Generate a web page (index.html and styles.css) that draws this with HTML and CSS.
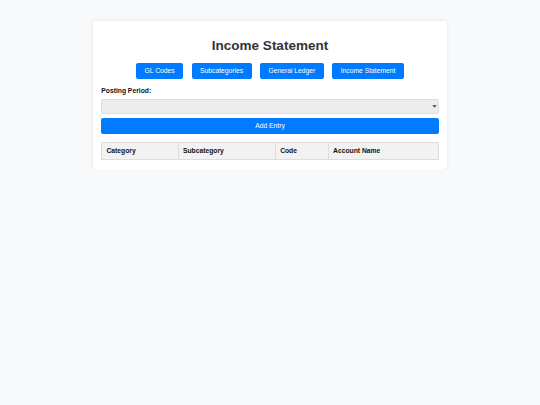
FILE: index.html
```html
<!DOCTYPE html>
<html lang="en">
<head>
<meta charset="utf-8">
<title>Income Statement</title>
<link rel="stylesheet" href="styles.css">
</head>
<body>
<div class="container">
  <h1 class="title">Income Statement</h1>
  <nav class="nav">
    <button class="btn">GL Codes</button>
    <button class="btn">Subcategories</button>
    <button class="btn">General Ledger</button>
    <button class="btn">Income Statement</button>
  </nav>
  <label class="label" for="period">Posting Period:</label>
  <div class="select-wrap">
    <select id="period" class="select"><option></option></select>
    <svg class="chev" width="5" height="3" viewBox="0 0 5 3" aria-hidden="true"><path d="M0.3 0.3 L2.5 2.6 L4.7 0.3 Z" fill="#333"/></svg>
  </div>
  <button class="btn btn-block">Add Entry</button>
  <table class="table">
    <thead>
      <tr>
        <th class="c1">Category</th>
        <th class="c2">Subcategory</th>
        <th class="c3">Code</th>
        <th class="c4">Account Name</th>
      </tr>
    </thead>
    <tbody></tbody>
  </table>
</div>
</body>
</html>
```

FILE: styles.css
```css
html, body {
  margin: 0;
  padding: 0;
}
body {
  background: #f8f9fa;
  font-family: "Liberation Sans", Arial, sans-serif;
  color: #333;
  padding-top: 21px;
}
.container {
  width: 337.5px;
  margin: 0 auto;
  padding: 8.4px;
  background: #fff;
  border-radius: 3.4px;
  box-shadow: 0 0 4px rgba(0, 0, 0, 0.1);
}
.title {
  font-size: 13.5px;
  line-height: 15.5px;
  margin: 9px 0;
  text-align: center;
  font-weight: bold;
  color: #333;
}
.nav {
  display: flex;
  justify-content: center;
  gap: 8.5px;
  margin-bottom: 8.4px;
}
.btn {
  font-family: "Liberation Sans", Arial, sans-serif;
  font-size: 6.75px;
  line-height: 7.8px;
  padding: 4.2px 8.4px;
  background: #007bff;
  color: #fff;
  border: none;
  border-radius: 2px;
  margin: 0;
}
.label {
  display: block;
  font-size: 6.75px;
  line-height: 7.8px;
  font-weight: bold;
  color: #111;
  margin-top: -0.5px;
  margin-bottom: 4px;
}
.select-wrap {
  position: relative;
}
.select {
  display: block;
  width: 100%;
  height: 15px;
  margin: 0;
  padding: 0 3px;
  font-size: 6.75px;
  background: #ececec;
  border: 0.5px solid #dedede;
  border-radius: 2px;
  color: #333;
  appearance: none;
  -webkit-appearance: none;
}
.chev {
  position: absolute;
  right: 1.5px;
  top: 6.2px;
  pointer-events: none;
}
.btn-block {
  display: block;
  width: 100%;
  margin-top: 4px;
  height: 16px;
  padding: 0;
}
.table {
  width: 100%;
  border-collapse: collapse;
  margin-top: 8.4px;
  table-layout: fixed;
}
.table th {
  background: #f2f2f2;
  border: 0.5px solid #dddddd;
  font-size: 6.75px;
  line-height: 7.8px;
  padding: 4.2px 4.2px;
  text-align: left;
  color: #111;
  font-weight: bold;
}
.c1 { width: 22.5%; }
.c2 { width: 29.3%; }
.c3 { width: 14.7%; }
.c4 { width: 33.5%; }
```
